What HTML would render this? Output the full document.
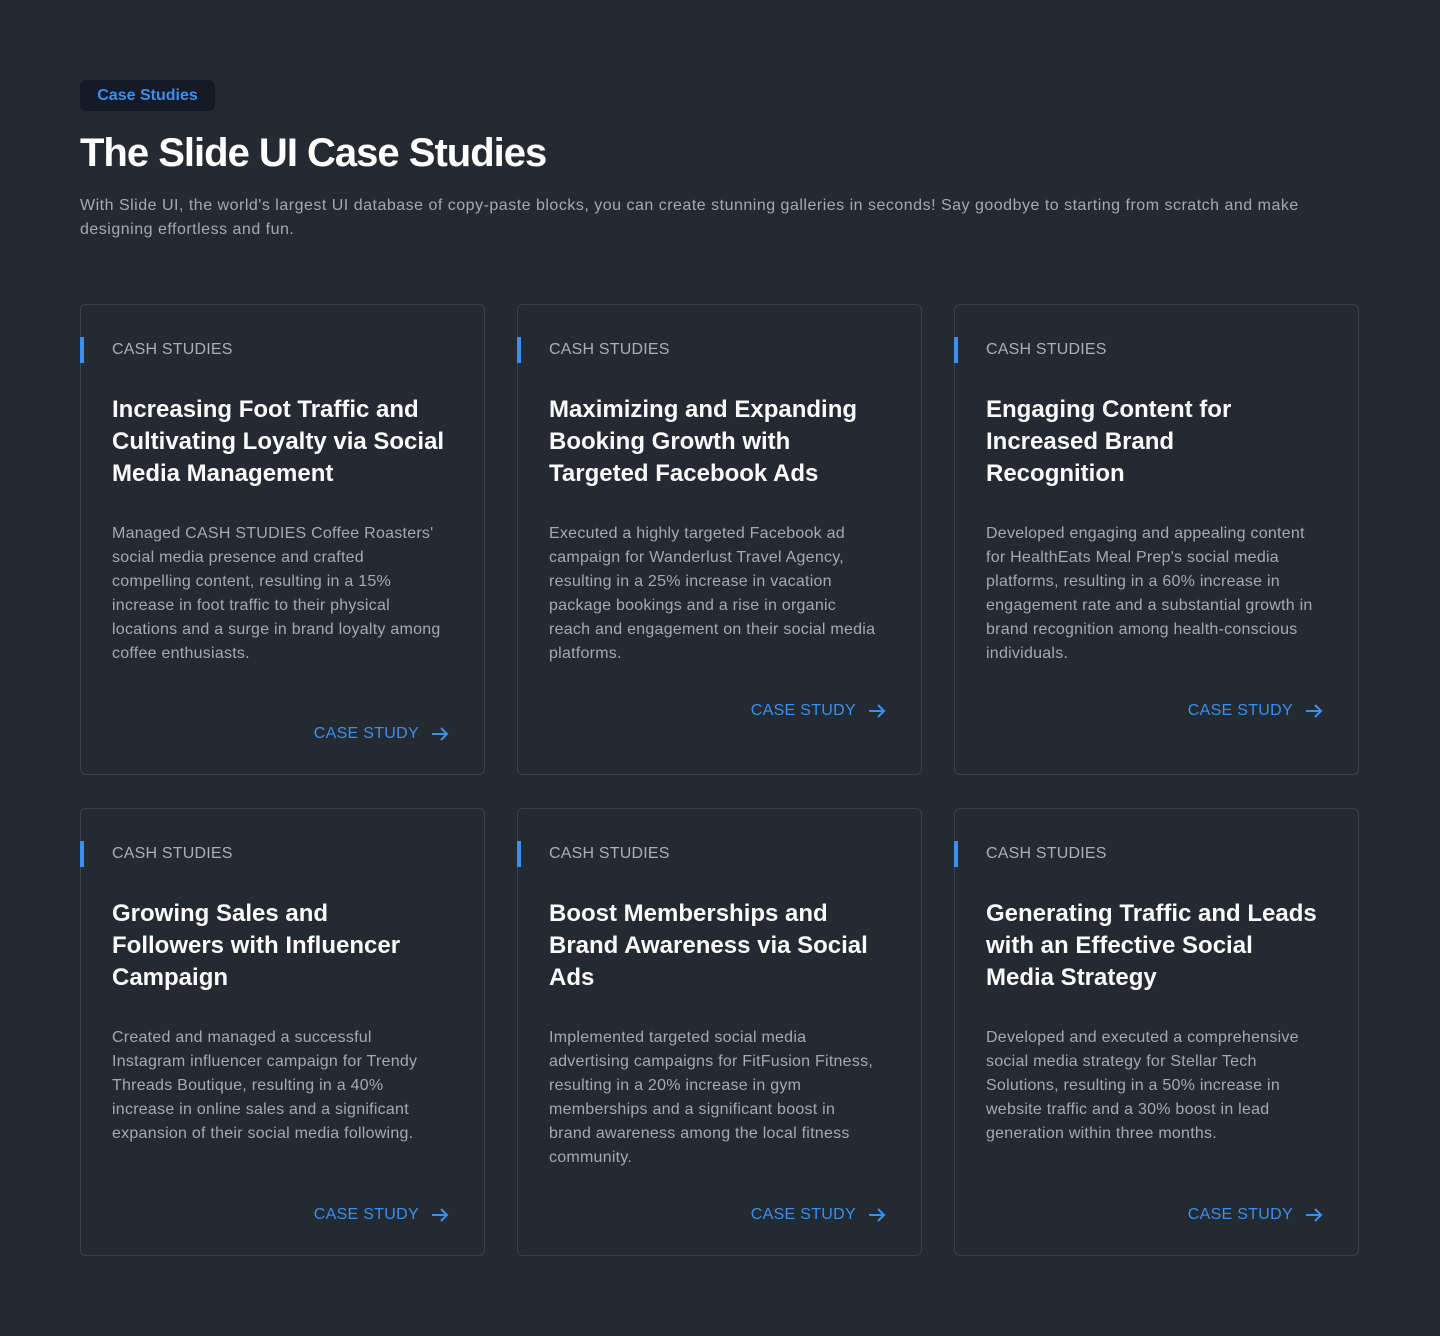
<!DOCTYPE html>
<html><head><meta charset="utf-8"><style>
*{box-sizing:border-box;margin:0;padding:0}
body{width:1440px;height:1336px;background:#242a31;font-family:"Liberation Sans",sans-serif;color:#fff;overflow:hidden}
.wrap{padding:80px 80px 0 80px}
.badge{display:inline-block;height:31px;width:135px;background:#141b26;border-radius:6px;color:#3b8ff0;font-size:16px;line-height:31px;text-align:center;font-weight:bold}
h1{font-size:40px;font-weight:bold;letter-spacing:-1px;margin-top:18px;line-height:48px}
.lead{margin-top:17px;font-size:16px;line-height:24px;color:#a3aab3;white-space:nowrap;letter-spacing:0.5px}
.grid{display:grid;grid-template-columns:405px 405px 405px;column-gap:32px;row-gap:33px;margin-top:62px}
.card{border:1px solid #3b4149;border-radius:6px;padding:33px 35px 28px 31px;display:flex;flex-direction:column;position:relative}
.card.r1{height:471px}.card.r2{height:448px}
.lbl{font-size:16px;line-height:24px;color:#a9b0b8;position:relative;letter-spacing:0.2px}
.lbl:before{content:"";position:absolute;left:-32px;top:-1px;width:4px;height:26px;background:#3b8ff0}
h3{font-size:24px;line-height:32px;font-weight:bold;margin-top:32px;color:#fafafa;white-space:nowrap}
p{font-size:16px;line-height:24px;color:#a3aab3;margin-top:32px;white-space:nowrap;letter-spacing:0.25px}
.link{margin-top:auto;align-self:flex-end;color:#3b8ff0;font-size:16px;line-height:24px;display:flex;align-items:center;gap:12px;letter-spacing:0.3px}
.card.up .link{margin-bottom:23px}
</style></head><body><div class="wrap">
<div class="badge">Case Studies</div>
<h1>The Slide UI Case Studies</h1>
<div class="lead">With Slide UI, the world's largest UI database of copy-paste blocks, you can create stunning galleries in seconds! Say goodbye to starting from scratch and make<br>designing effortless and fun.</div>
<div class="grid">
<div class="card r1"><div class="lbl">CASH STUDIES</div><h3>Increasing Foot Traffic and<br>Cultivating Loyalty via Social<br>Media Management</h3><p>Managed CASH STUDIES Coffee Roasters'<br>social media presence and crafted<br>compelling content, resulting in a 15%<br>increase in foot traffic to their physical<br>locations and a surge in brand loyalty among<br>coffee enthusiasts.</p><div class="link">CASE STUDY <svg width="18" height="16" viewBox="0 0 18 16" fill="none" stroke="#3b8ff0" stroke-width="2"><path d="M1 8h15M10 2l6 6-6 6"/></svg></div></div>
<div class="card r1 up"><div class="lbl">CASH STUDIES</div><h3>Maximizing and Expanding<br>Booking Growth with<br>Targeted Facebook Ads</h3><p>Executed a highly targeted Facebook ad<br>campaign for Wanderlust Travel Agency,<br>resulting in a 25% increase in vacation<br>package bookings and a rise in organic<br>reach and engagement on their social media<br>platforms.</p><div class="link">CASE STUDY <svg width="18" height="16" viewBox="0 0 18 16" fill="none" stroke="#3b8ff0" stroke-width="2"><path d="M1 8h15M10 2l6 6-6 6"/></svg></div></div>
<div class="card r1 up"><div class="lbl">CASH STUDIES</div><h3>Engaging Content for<br>Increased Brand<br>Recognition</h3><p>Developed engaging and appealing content<br>for HealthEats Meal Prep's social media<br>platforms, resulting in a 60% increase in<br>engagement rate and a substantial growth in<br>brand recognition among health-conscious<br>individuals.</p><div class="link">CASE STUDY <svg width="18" height="16" viewBox="0 0 18 16" fill="none" stroke="#3b8ff0" stroke-width="2"><path d="M1 8h15M10 2l6 6-6 6"/></svg></div></div>
<div class="card r2"><div class="lbl">CASH STUDIES</div><h3>Growing Sales and<br>Followers with Influencer<br>Campaign</h3><p>Created and managed a successful<br>Instagram influencer campaign for Trendy<br>Threads Boutique, resulting in a 40%<br>increase in online sales and a significant<br>expansion of their social media following.</p><div class="link">CASE STUDY <svg width="18" height="16" viewBox="0 0 18 16" fill="none" stroke="#3b8ff0" stroke-width="2"><path d="M1 8h15M10 2l6 6-6 6"/></svg></div></div>
<div class="card r2"><div class="lbl">CASH STUDIES</div><h3>Boost Memberships and<br>Brand Awareness via Social<br>Ads</h3><p>Implemented targeted social media<br>advertising campaigns for FitFusion Fitness,<br>resulting in a 20% increase in gym<br>memberships and a significant boost in<br>brand awareness among the local fitness<br>community.</p><div class="link">CASE STUDY <svg width="18" height="16" viewBox="0 0 18 16" fill="none" stroke="#3b8ff0" stroke-width="2"><path d="M1 8h15M10 2l6 6-6 6"/></svg></div></div>
<div class="card r2"><div class="lbl">CASH STUDIES</div><h3>Generating Traffic and Leads<br>with an Effective Social<br>Media Strategy</h3><p>Developed and executed a comprehensive<br>social media strategy for Stellar Tech<br>Solutions, resulting in a 50% increase in<br>website traffic and a 30% boost in lead<br>generation within three months.</p><div class="link">CASE STUDY <svg width="18" height="16" viewBox="0 0 18 16" fill="none" stroke="#3b8ff0" stroke-width="2"><path d="M1 8h15M10 2l6 6-6 6"/></svg></div></div>
</div></div></body></html>
